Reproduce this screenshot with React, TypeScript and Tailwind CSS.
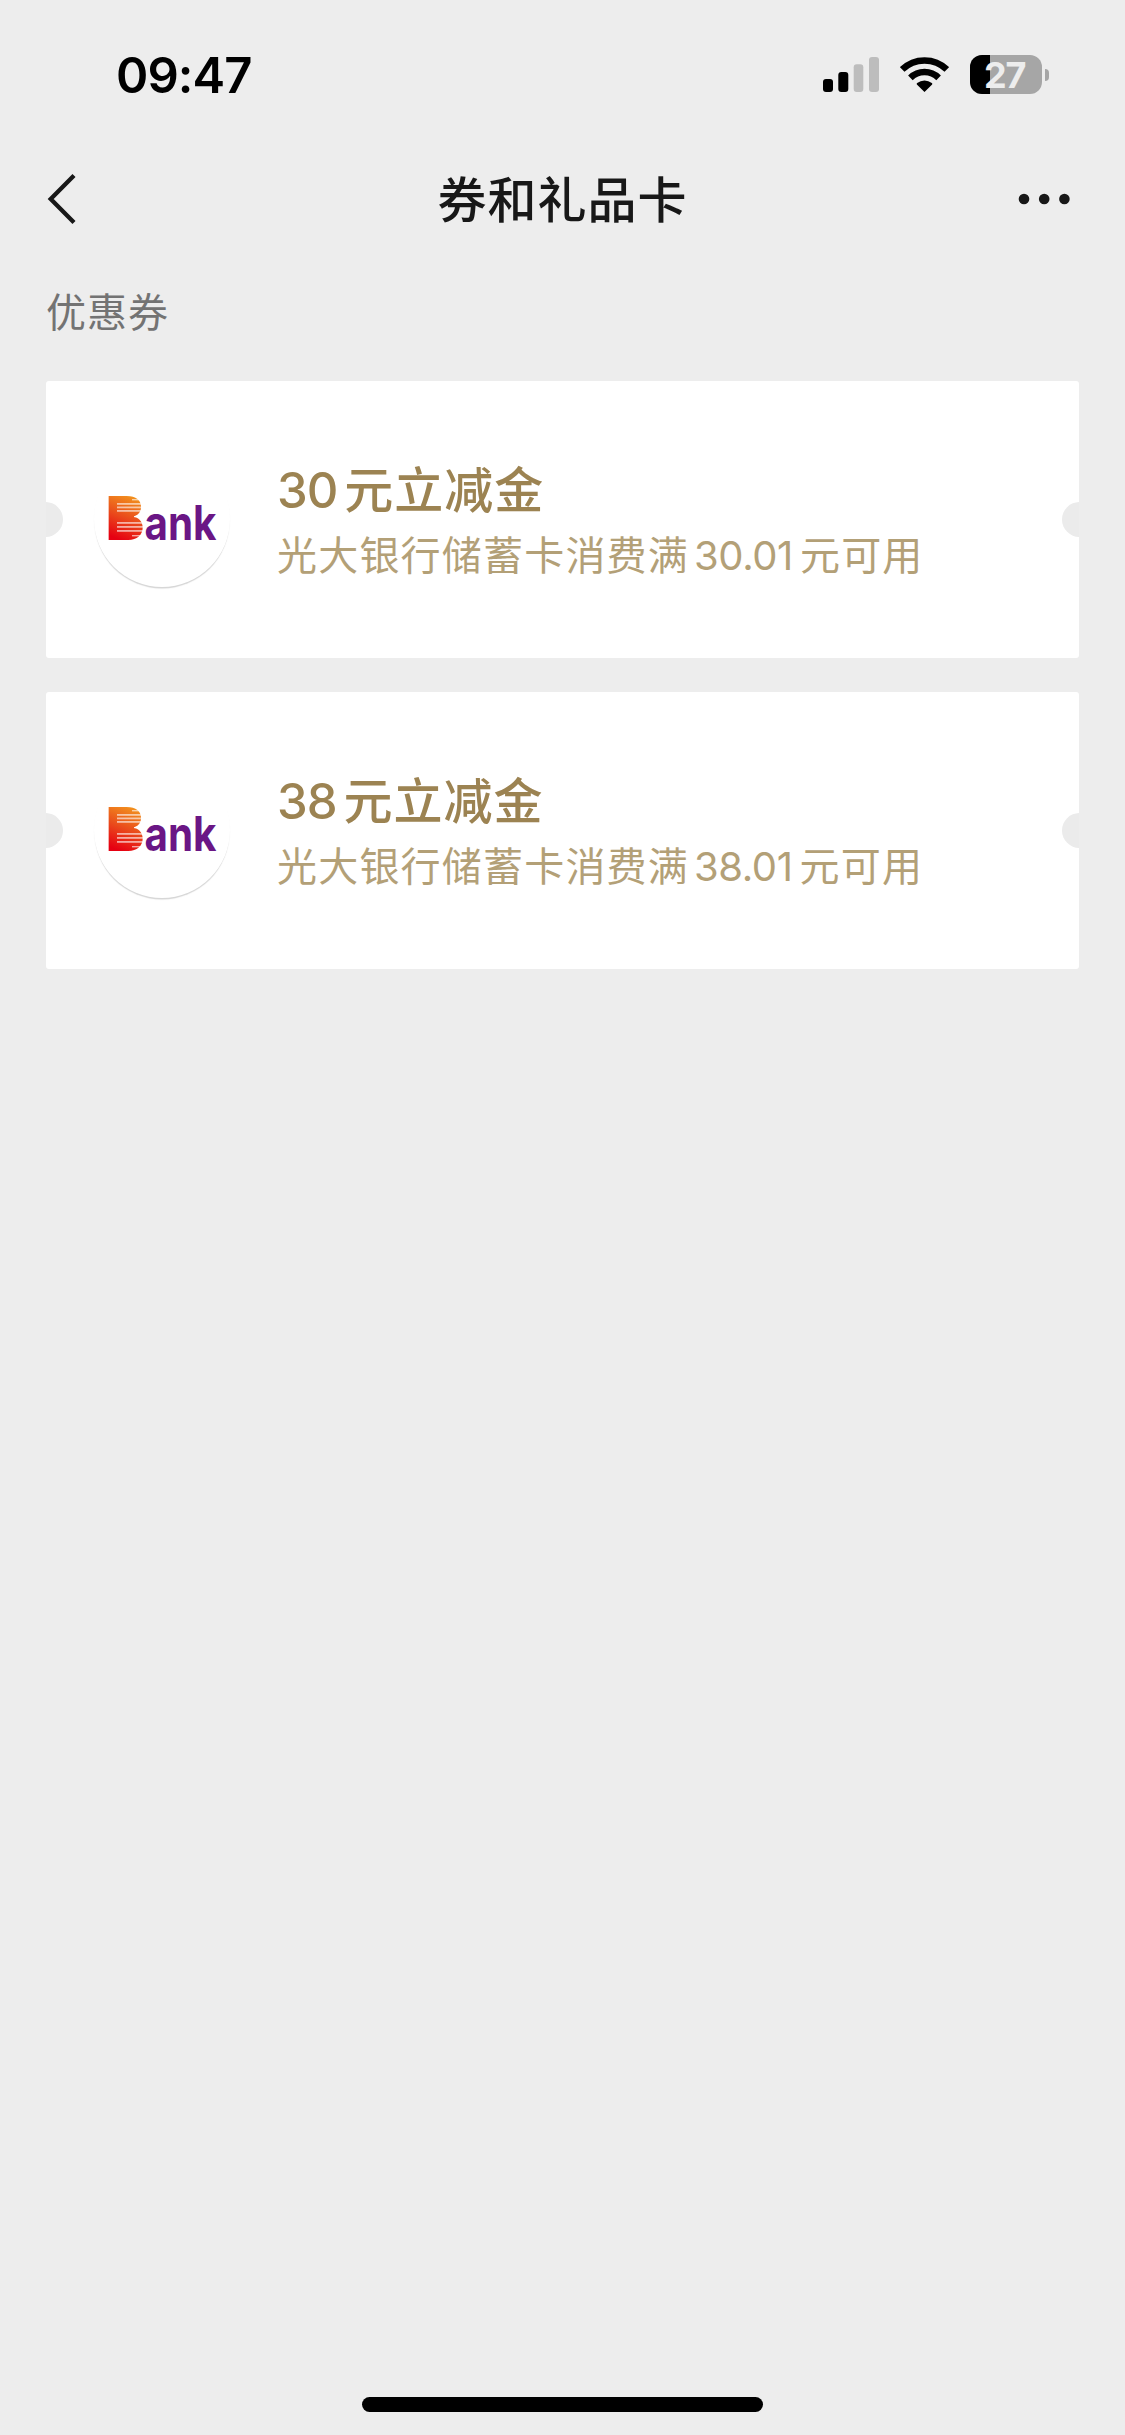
import { ReactNode } from "react";

const coupons = [
  { id: 1, amount: "30", threshold: "30.01" },
  { id: 2, amount: "38", threshold: "38.01" },
];

export default function App() {
  return (
    <main className="flex h-[2435px] w-[1125px] flex-col overflow-hidden bg-[#ededed] font-['Noto_Sans_CJK_SC',sans-serif]">
      <StatusBar />
      <NavBar />

      <section className="flex-1 px-[46px] pt-[32px]">
        <h2 className="h-[59px] text-[40px] leading-[59px] tracking-[1px] text-[#737373]">
          优惠券
        </h2>
        <div className="mt-[41px] flex flex-col gap-[34px]">
          {coupons.map((coupon) => (
            <CouponCard
              key={coupon.id}
              amount={coupon.amount}
              threshold={coupon.threshold}
            />
          ))}
        </div>
      </section>

      {/* Home indicator */}
      <div className="flex h-[38px] justify-center">
        <div className="h-[15px] w-[401px] rounded-full bg-black" />
      </div>
    </main>
  );
}

function StatusBar() {
  return (
    <header className="flex h-[149px] items-center justify-between pr-[76px] pl-[116px]">
      <span className="mt-[2px] font-['Inter'] text-[49px] leading-none font-semibold tracking-[-0.9px] text-black">
        09:47
      </span>
      <div className="flex items-center">
        <svg width="56" height="35" viewBox="0 0 56 35" className="mr-[21px]">
          <rect x="0" y="22" width="10" height="13" rx="3" fill="#000" />
          <rect x="15.3" y="15" width="10" height="20" rx="3" fill="#000" />
          <rect x="30.7" y="7.3" width="9.6" height="27.7" rx="3" fill="#bdbdbd" />
          <rect x="46" y="0" width="10" height="35" rx="3" fill="#bdbdbd" />
        </svg>
        <svg width="49" height="35" viewBox="0 0 49 35" className="mr-[21px]">
          <path
            d="M2.2 12.5a32 32 0 0 1 44.6 0M10.4 20.9a20 20 0 0 1 28.2 0"
            fill="none"
            stroke="#000"
            strokeWidth="6.5"
          />
          <path
            d="M24.5 35l-7.4-7.3c-.6-.6-.6-1.2.1-1.7a11.9 11.9 0 0 1 14.6 0c.7.5.7 1.1.1 1.7z"
            fill="#000"
          />
        </svg>
        <div className="relative h-[39px] w-[72px] rounded-[12px] bg-[#a6a6a6]">
          <div className="h-full w-[20px] rounded-l-[12px] bg-black" />
          <span className="absolute top-0 left-[14px] font-['Inter'] text-[36px] leading-[40px] font-bold tracking-[-1.2px] text-[#ededed]">
            27
          </span>
        </div>
        <div className="ml-[3px] h-[12px] w-[4px] rounded-r-full bg-[#a6a6a6]" />
      </div>
    </header>
  );
}

function NavBar() {
  return (
    <nav className="grid h-[100px] grid-cols-[1fr_auto_1fr] items-center pr-[55px] pl-[47px]">
      <svg width="30" height="52" viewBox="0 0 30 52">
        <path d="M27 2.5L3.7 26L27 49.5" fill="none" stroke="#181818" strokeWidth="4.3" />
      </svg>
      <h1 className="mb-[6px] ml-[8px] text-[49px] leading-none font-medium tracking-[1px] text-[#181818]">
        券和礼品卡
      </h1>
      <svg width="52" height="12" viewBox="0 0 52 12" className="justify-self-end">
        <circle cx="6" cy="6" r="5.3" fill="#181818" />
        <circle cx="26.2" cy="6" r="5.3" fill="#181818" />
        <circle cx="46.4" cy="6" r="5.3" fill="#181818" />
      </svg>
    </nav>
  );
}

function CouponCard({ amount, threshold }: { amount: string; threshold: string }) {
  return (
    <article className="relative flex h-[277px] overflow-hidden rounded-[3px] bg-white">
      <div className="absolute top-[121px] -left-[18px] size-[35px] rounded-full bg-[#ebebeb]" />
      <div className="absolute top-[121px] -right-[18px] size-[35px] rounded-full bg-[#ebebeb]" />

      <div className="mt-[70px] ml-[48px] size-[136px] rounded-full bg-white shadow-[0_2px_1px_-0.5px_rgba(0,0,0,0.17)]">
        <BankLogo />
      </div>

      <div className="ml-[47px] pt-[74px] whitespace-nowrap">
        <p className="h-[64px] text-[49px] leading-[64px] font-medium tracking-[1px] text-[#9c8352]">
          <Digits className="mr-[7px] tracking-[-1px]">{amount}</Digits>
          元立减金
        </p>
        <p className="mt-[5px] h-[58px] text-[40px] leading-[58px] tracking-[1.2px] text-[#b3a077]">
          光大银行储蓄卡消费满
          <Digits className="mr-[7px] ml-[5px] tracking-[-0.4px]">{threshold}</Digits>
          元可用
        </p>
      </div>
    </article>
  );
}

function Digits({ className, children }: { className: string; children: ReactNode }) {
  return <span className={`font-['Inter'] leading-none ${className}`}>{children}</span>;
}

function BankLogo() {
  return (
    <svg width="136" height="136" viewBox="0 0 136 136">
      <defs>
        <linearGradient id="flame" gradientUnits="userSpaceOnUse" x1="42" y1="44" x2="24" y2="88">
          <stop offset="0" stopColor="#f39a1e" />
          <stop offset="0.5" stopColor="#ea4f1c" />
          <stop offset="1" stopColor="#e60012" />
        </linearGradient>
      </defs>
      <text
        x="12"
        y="89"
        fontSize="60"
        fontWeight="900"
        textLength="38"
        lengthAdjust="spacingAndGlyphs"
        fill="url(#flame)"
        fontFamily="Inter"
      >
        B
      </text>
      {/* Solid bowls with light bands running through them */}
      <rect x="20" y="51" width="20" height="32" fill="url(#flame)" />
      <g fill="#fff" opacity="0.6">
        <rect x="23" y="52" width="27" height="1.8" />
        <rect x="23" y="55.5" width="27" height="1.8" />
        <rect x="23" y="59" width="27" height="1.8" />
        <rect x="23" y="71" width="27" height="1.8" />
        <rect x="23" y="75" width="27" height="1.8" />
        <rect x="23" y="79" width="27" height="1.8" />
        <rect x="38" y="48" width="12" height="1.4" />
        <rect x="38" y="84" width="12" height="1.4" />
      </g>
      <text
        x="50.5"
        y="89"
        fontSize="48"
        fontWeight="700"
        textLength="72"
        lengthAdjust="spacingAndGlyphs"
        fill="#6a1685"
        fontFamily="Inter"
      >
        ank
      </text>
    </svg>
  );
}
